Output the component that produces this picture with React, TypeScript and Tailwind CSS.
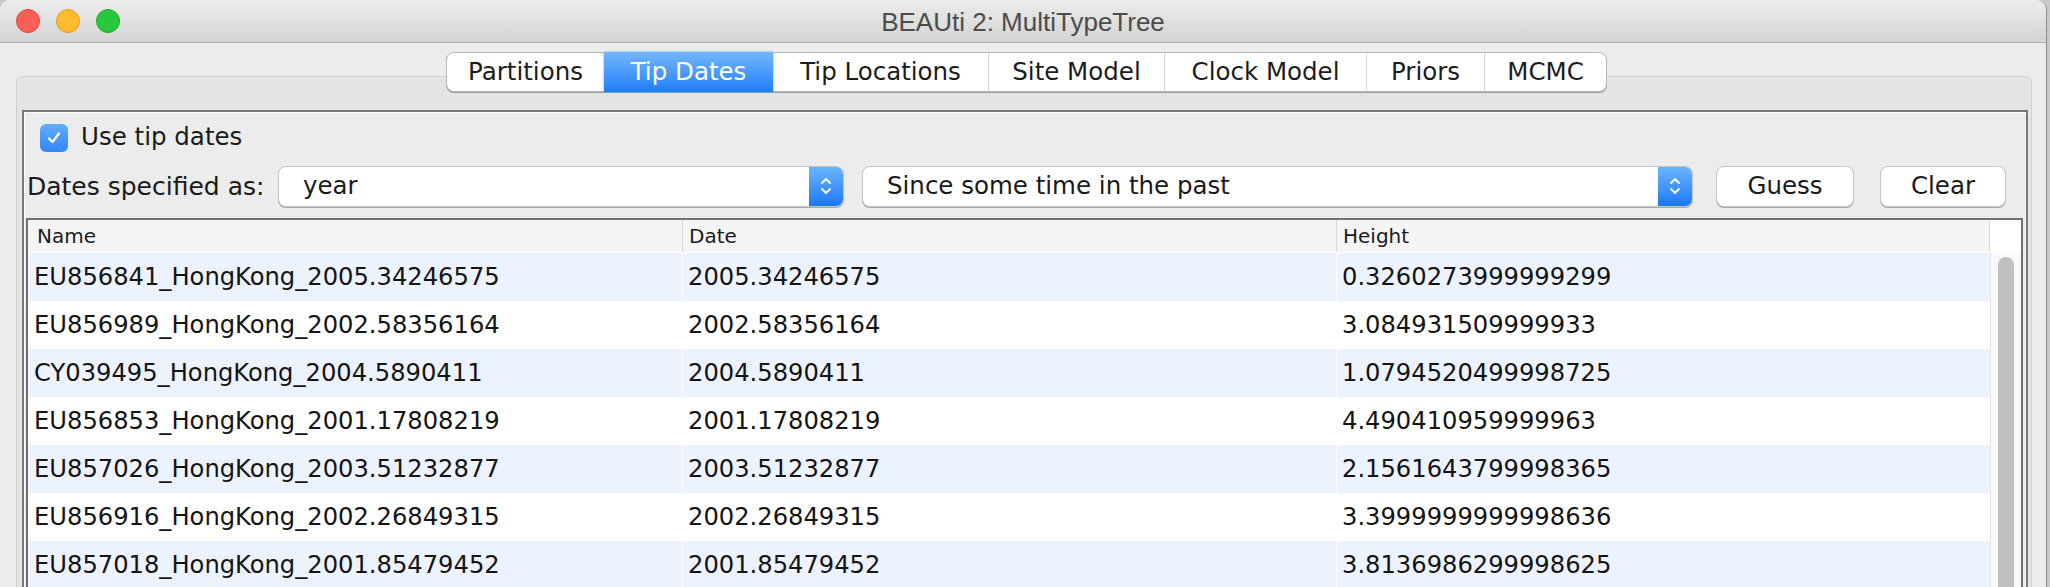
const tabs = [
  { label: "Partitions", w: "w-[157px]" },
  { label: "Tip Dates", w: "w-[169px]" },
  { label: "Tip Locations", w: "w-[215px]" },
  { label: "Site Model", w: "w-[176px]" },
  { label: "Clock Model", w: "w-[202px]" },
  { label: "Priors", w: "w-[118px]" },
  { label: "MCMC", w: "w-[122px]" },
]

const rows = [
  ["EU856841_HongKong_2005.34246575", "2005.34246575", "0.3260273999999299"],
  ["EU856989_HongKong_2002.58356164", "2002.58356164", "3.084931509999933"],
  ["CY039495_HongKong_2004.5890411", "2004.5890411", "1.0794520499998725"],
  ["EU856853_HongKong_2001.17808219", "2001.17808219", "4.490410959999963"],
  ["EU857026_HongKong_2003.51232877", "2003.51232877", "2.1561643799998365"],
  ["EU856916_HongKong_2002.26849315", "2002.26849315", "3.3999999999998636"],
  ["EU857018_HongKong_2001.85479452", "2001.85479452", "3.8136986299998625"],
]

const Arrows = () => (
  <svg width="14" height="24" viewBox="0 0 14 24" fill="none" stroke="white" strokeWidth="1.8" strokeLinecap="round" strokeLinejoin="round">
    <path d="M3 9 L7 5 L11 9" />
    <path d="M3 15 L7 19 L11 15" />
  </svg>
)

const Select = ({ value, w }: { value: string; w: string }) => (
  <div className={`${w} h-[41px] flex rounded-[8px] border border-[#c4c4c4] bg-white shadow-[0_1px_0_#a9a9a9] overflow-hidden`}>
    <span className="flex-1 pl-[24px] flex items-center text-[24.5px] text-[#1a1a1a]">{value}</span>
    <div className="w-[34px] bg-linear-to-b from-[#6cb3fc] to-[#1578f7] flex items-center justify-center">
      <Arrows />
    </div>
  </div>
)

const Button = ({ label, w }: { label: string; w: string }) => (
  <button className={`${w} h-[41px] rounded-[8px] border border-[#c6c6c6] bg-white shadow-[0_1px_0_#a9a9a9] text-[24.5px] text-[#1a1a1a] flex items-center justify-center`}>
    {label}
  </button>
)

function tabClass(sel: boolean, i: number, w: string) {
  const base = `${w} flex items-center justify-center text-[24.5px] whitespace-nowrap pt-[1px]`
  if (sel) {
    return `${base} -my-[1px] bg-linear-to-b from-[#72b6fc] to-[#1b7ff8] text-white shadow-[0_0_2px_#5ea8fb]`
  }
  const divider = i > 0 && i !== 2 ? "border-l border-[#d6d6d6]" : ""
  const round = i === 0 ? "rounded-l-[8px]" : i === tabs.length - 1 ? "rounded-r-[8px]" : ""
  return `${base} ${divider} ${round} text-[#1c1c1c]`
}

export default function App() {
  return (
    <div className="w-[2050px] h-[587px] overflow-hidden bg-[#c9c9c9] font-['DejaVu_Sans','Liberation_Sans',sans-serif]">
      <div className="w-[2047px] h-[587px] bg-[#ececec] rounded-t-[10px] border-r border-[#8c8c8c] flex flex-col overflow-hidden">
        {/* title bar */}
        <div className="h-[43px] shrink-0 grid grid-cols-[1fr_auto_1fr] items-center bg-linear-to-b from-[#ececec] to-[#d4d4d4] border-b border-[#b0b0b0]">
          <div className="flex items-center gap-[16px] pl-[16px]">
            <span className="w-[24px] h-[24px] rounded-full bg-[#fc5f57] border border-[#e0463e]" />
            <span className="w-[24px] h-[24px] rounded-full bg-[#fdbc2e] border border-[#df9e22]" />
            <span className="w-[24px] h-[24px] rounded-full bg-[#29c740] border border-[#1eaa2e]" />
          </div>
          <span className="font-['Liberation_Sans',sans-serif] text-[26px] text-[#4c4c4c] leading-none pt-[1px]">BEAUti 2: MultiTypeTree</span>
          <div />
        </div>

        {/* tab strip */}
        <div className="relative z-10 mt-[9px] ml-[446px] flex h-[42px] w-fit rounded-[8px] border border-[#b7b7b7] bg-white shadow-[0_1px_0_#9c9c9c]">
          {tabs.map((t, i) => (
            <div key={t.label} className={tabClass(t.label === "Tip Dates", i, t.w)}>
              {t.label}
            </div>
          ))}
        </div>

        {/* tab pane */}
        <div className="-mt-[16px] ml-[16px] mr-[14px] flex-1 rounded-t-[6px] border border-[#d0d0d0] bg-[#e4e4e4] pt-[33px] pl-[5px] pr-[3px] flex flex-col">
          <div className="flex-1 border-2 border-[#777777] shadow-[inset_1px_1px_0_#ffffff] bg-[#ececec] flex flex-col">
            <div className="mt-[12px] ml-[16px] flex items-center h-[28px] gap-[13px]">
              <span className="w-[28px] h-[28px] rounded-[6px] bg-linear-to-b from-[#62abfb] to-[#3088f7] flex items-center justify-center">
                <svg width="18" height="18" viewBox="0 0 18 18" fill="none" stroke="white" strokeWidth="2.2" strokeLinecap="round" strokeLinejoin="round">
                  <path d="M4 9.5 L7.5 13 L14 4.5" />
                </svg>
              </span>
              <span className="text-[24.5px] text-[#1a1a1a]">Use tip dates</span>
            </div>

            <div className="mt-[14px] flex items-center h-[41px]">
              <span className="w-[254px] pl-[3px] text-[25px] text-[#1a1a1a] whitespace-nowrap">Dates specified as:</span>
              <Select value="year" w="w-[566px]" />
              <div className="w-[18px]" />
              <Select value="Since some time in the past" w="w-[831px]" />
              <div className="w-[23px]" />
              <Button label="Guess" w="w-[138px]" />
              <div className="w-[26px]" />
              <Button label="Clear" w="w-[126px]" />
            </div>

            <div className="mt-[11px] ml-[2px] mr-[3px] flex-1 border-2 border-b-0 border-[#707070] bg-white flex flex-col">
              <div className="flex h-[33px] border-b border-white">
                <div className="grid grid-cols-[655px_654px_653px] bg-[#f5f5f5] text-[20px] text-[#1a1a1a]">
                  <div className="pl-[9px] flex items-center border-r border-[#d8d8d8]">Name</div>
                  <div className="pl-[6px] flex items-center border-r border-[#d8d8d8]">Date</div>
                  <div className="pl-[6px] flex items-center border-r border-[#d8d8d8]">Height</div>
                </div>
                <div className="flex-1 bg-white" />
              </div>
              <div className="flex flex-1">
                <div className="flex flex-col">
                  {rows.map((r, i) => (
                    <div
                      key={r[0]}
                      className={`grid grid-cols-[655px_654px_653px] h-[48px] shrink-0 text-[24.2px] text-[#141414] ${i % 2 === 0 ? "bg-[#ecf3fe]" : "bg-white"}`}
                    >
                      <div className="pl-[6px] flex items-center border-r border-white">{r[0]}</div>
                      <div className="pl-[5px] flex items-center border-r border-white">{r[1]}</div>
                      <div className="pl-[5px] flex items-center">{r[2]}</div>
                    </div>
                  ))}
                </div>
                <div className="flex-1 bg-[#f9f9f9] border-l border-[#e4e4e4] pt-[4px] flex justify-center">
                  <div className="w-[16px] h-full rounded-t-full bg-[#c1c1c1]" />
                </div>
              </div>
            </div>
          </div>
        </div>
      </div>
    </div>
  )
}
